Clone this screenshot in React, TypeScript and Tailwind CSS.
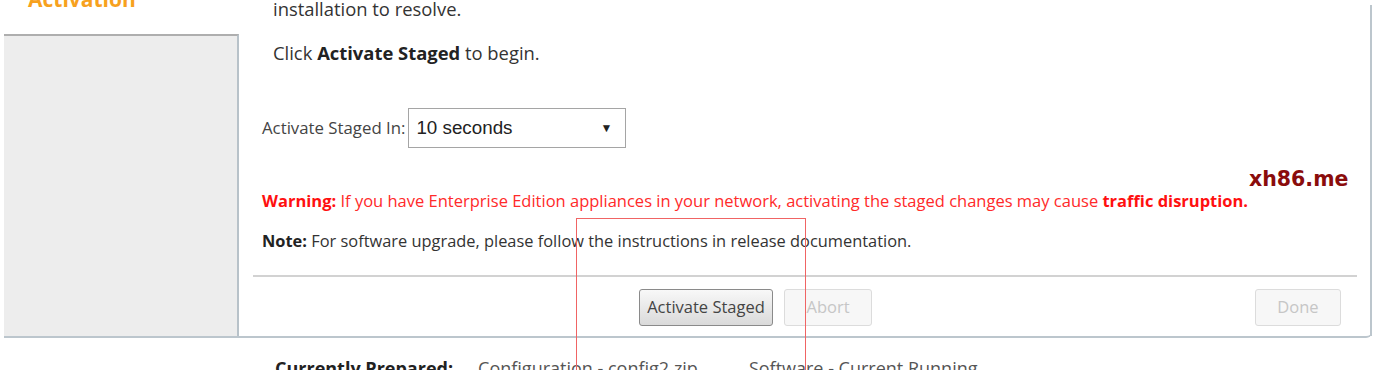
import React from 'react';

const ui = { fontFamily: '"Open Sans", "Noto Sans", sans-serif' };

function Btn({ label, disabled, w }: { label: string; disabled?: boolean; w: string }) {
  return (
    <button
      disabled={disabled}
      className={
        disabled
          ? `${w} h-[37px] rounded-[3px] border border-[#dcdcdc] bg-[#f7f7f7] text-[16.5px] text-[#c6c6c6]`
          : `${w} h-[37px] rounded-[3px] border border-[#8a8a8a] bg-gradient-to-b from-[#f8f8f8] to-[#dadada] text-[16.5px] text-[#444]`
      }
      style={ui}
    >
      {label}
    </button>
  );
}

export default function App() {
  return (
    <div className="relative w-[1376px] h-[370px] overflow-hidden bg-white text-[#333]" style={ui}>
      <div className="ml-[4px] w-[1368px] flex border-b-2 border-[#bcc6cd] rounded-br-[6px]">
        {/* left nav column */}
        <div className="w-[235px] flex flex-col shrink-0">
          <div className="h-[34px] pl-[24px] -mt-[16px]">
            <div className="text-[21px] font-bold text-[#f7a11e] leading-[30px]">Activation</div>
          </div>
          <div className="flex-1 bg-[#ededed] border-t-2 border-[#aeaeae] border-r-2 border-r-[#b8c2c9] mt-[16px]" />
        </div>

        {/* main content */}
        <div className="flex-1 border-r-2 border-[#bcc6cd] mt-[5px]">
          <div className="pl-[34px] text-[18.4px] leading-[24px] -mt-[8px]">installation to resolve.</div>
          <div className="pl-[34px] text-[18.4px] leading-[24px] mt-[20px]">
            Click <b className="text-[#222]">Activate Staged</b> to begin.
          </div>

          <div className="flex items-center pl-[23px] mt-[43px]">
            <span className="text-[16.8px] text-[#444] mr-[3px]">Activate Staged In:</span>
            <div
              className="w-[218px] h-[40px] border border-[#a5a5a5] flex items-center justify-between pl-[7px] pr-[13px] text-[18.8px] text-[#222]"
              style={{ fontFamily: '"Liberation Sans", Arial, sans-serif' }}
            >
              <span>10 seconds</span>
              <span className="text-[12px]">▼</span>
            </div>
          </div>

          <div className="pl-[23px] mt-[42px] text-[16.5px] leading-[22px] text-[#ff2a2a]">
            <b className="text-[#ff1010]">Warning:</b> If you have Enterprise Edition appliances in your network, activating the staged changes may cause{' '}
            <b className="text-[#ff1010]">traffic disruption.</b>
          </div>
          <div className="pl-[23px] mt-[18px] text-[16.4px] leading-[22px] text-[#333]">
            <b className="text-[#222]">Note:</b> For software upgrade, please follow the instructions in release documentation.
          </div>

          <div className="ml-[14px] mr-[13px] mt-[23px] border-t-2 border-[#d2d2d2]" />

          <div className="flex items-center pl-[400px] pr-[29px] mt-[12px] pb-[10px] gap-[11px]">
            <Btn label="Activate Staged" w="w-[134px]" />
            <Btn label="Abort" disabled w="w-[88px]" />
            <div className="ml-auto">
              <Btn label="Done" disabled w="w-[86px]" />
            </div>
          </div>
        </div>
      </div>

      <div className="flex items-center mt-[18px] text-[18px] leading-[24px]">
        <b className="ml-[275px] text-[#222]">Currently Prepared:</b>
        <span className="ml-[25px] text-[#555]">Configuration - config2.zip</span>
        <span className="ml-[51px] text-[#555]">Software - Current Running</span>
      </div>

      {/* watermark */}
      <div
        className="absolute left-[1249px] top-[164px] text-[20.5px] font-bold text-[#8a0c0c]"
        style={{ fontFamily: '"DejaVu Sans", sans-serif' }}
      >
        xh86.me
      </div>

      {/* red annotation box */}
      <div className="absolute left-[576px] top-[218px] w-[230px] h-[200px] border border-[#f06464]" />
    </div>
  );
}
